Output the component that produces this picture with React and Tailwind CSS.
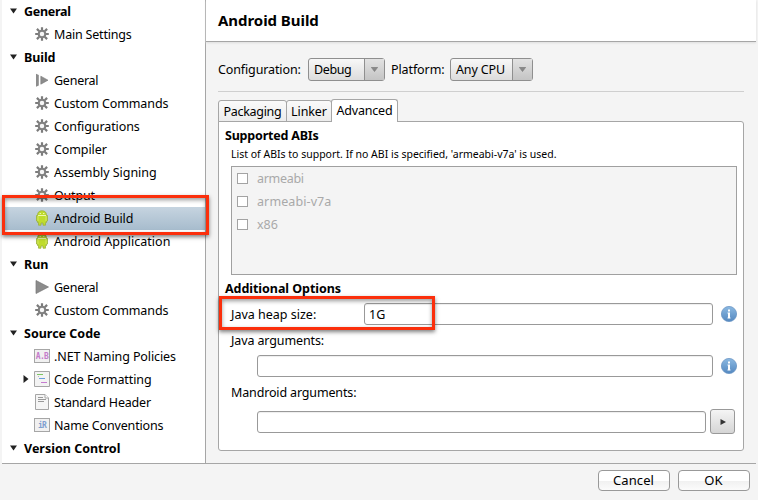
import React from "react";

function Gear() {
  return (
    <svg width="14" height="14" viewBox="0 0 14 14">
      <g stroke="#7c7c7c" strokeWidth="2.200">
        <path d="M7 .2v3.300M7 10.500v3.300M.2 7h3.300M10.500 7h3.300" />
        <path d="M1.900 1.900l2.400 2.400M9.700 9.700l2.400 2.400M12.100 1.900L9.700 4.300M4.300 9.700l-2.400 2.400" />
      </g>
      <circle cx="7" cy="7" r="3.300" fill="#f6f6f6" stroke="#808080" strokeWidth="2.100" />
    </svg>
  );
}

function Step() {
  return (
    <svg width="14" height="14" viewBox="0 0 14 14">
      <path d="M1 .8l2.800 1.200v10.500L1 13.700z" fill="#8c8c8c" />
      <path d="M5.800 3.200v8L13 7.200z" fill="#8c8c8c" stroke="#777" strokeWidth=".6" />
    </svg>
  );
}

function Play() {
  return (
    <svg width="14" height="14" viewBox="0 0 14 14">
      <path d="M1 .5v13L13.500 7z" fill="#8c8c8c" stroke="#777" strokeWidth=".7" />
    </svg>
  );
}

function Droid() {
  return (
    <svg width="14" height="16" viewBox="0 0 14 16">
      <path
        d="M2.500 5.500C2.500 2.300 4 .8 7 .8s4.500 1.500 4.500 4.700h1v5.500h-1v1.500h-1v2.700H8v-2.200H6v2.200H3.500v-2.700h-1V11h-1V5.500z"
        fill="#bfdc2c"
        stroke="#9bb13c"
        strokeWidth=".8"
      />
      <path d="M3 5.500h8" stroke="#edf7ae" />
      <path d="M3 6v5M11 6v5" stroke="#dcec7c" strokeWidth=".7" />
      <circle cx="5.200" cy="3.500" r=".6" fill="#fff" />
      <circle cx="8.800" cy="3.500" r=".6" fill="#fff" />
    </svg>
  );
}

function Badge({ children, color }) {
  return (
    <span className={"flex h-[14px] w-4 items-center justify-center border border-[#a6a6a6] bg-[#f1f1f1] pt-0.5 font-['DejaVu_Sans_Mono',monospace] text-[8px] font-bold tracking-[-0.7px] leading-none " + color}>
      {children}
    </span>
  );
}

function Format() {
  return (
    <svg width="16" height="16" viewBox="0 0 16 16">
      <path d="M.5.500h15v15H.5z" fill="#f3f3f3" stroke="#a6a6a6" />
      <path d="M3 3.500h6" stroke="#7cc562" />
      <path d="M4 5.500h1" stroke="#bbb" />
      <path d="M5 7.500h6" stroke="#6a9fdc" />
      <path d="M7 11.500h6" stroke="#c57bd0" />
    </svg>
  );
}

function Page() {
  return (
    <svg width="14" height="16" viewBox="0 0 14 16">
      <path d="M.5.500h9.500l3.500 3.500v11.500H.5z" fill="#f5f5f5" stroke="#a6a6a6" />
      <path d="M10 .5V4h3.500" fill="#fff" stroke="#a6a6a6" />
      <path d="M3 3.500h5M3 5.500h8M3 7.500h6" stroke="#999" />
    </svg>
  );
}

function Section({ children, track }) {
  return (
    <div className="flex h-[23px] items-center pb-px pl-2">
      <svg width="7" height="6" viewBox="0 0 7 6">
        <path d="M0 .5h7L3.500 5.500z" fill="#222" />
      </svg>
      <span className={"mt-0.5 ml-[7px] font-bold " + track}>{children}</span>
    </div>
  );
}

function Item({ icon, children, track, selected, expandable }) {
  return (
    <div className={"flex h-[23px] items-center pb-px " + (selected ? "bg-linear-to-b from-[#c6d4e0] to-[#a7bccd]" : "")}>
      <span className="flex w-8 justify-end pr-1">
        {expandable && (
          <svg width="6" height="8" viewBox="0 0 6 8" className="mr-px">
            <path d="M.5 0v8L5.500 4z" fill="#222" />
          </svg>
        )}
      </span>
      <span className="flex w-4 justify-center">{icon}</span>
      <span className={"mt-0.5 ml-1 " + track}>{children}</span>
    </div>
  );
}

function Combo({ children, width, track }) {
  return (
    <div className={"flex h-[23px] rounded-[3px] border border-[#8f8f8f] bg-linear-to-b from-[#f8f8f8] to-[#dcdcdc] " + width}>
      <span className={"flex flex-1 items-center pt-px pl-[5px] " + track}>{children}</span>
      <span className="flex w-5 items-center justify-center border-l border-[#8f8f8f] bg-linear-to-b from-[#e2e2e2] to-[#c4c4c4]">
        <svg width="7" height="5" viewBox="0 0 7 5">
          <path d="M.3.300h6.400L3.500 4.600z" fill="#888" stroke="#777" strokeWidth=".6" />
        </svg>
      </span>
    </div>
  );
}

function Abi({ children, track }) {
  return (
    <div className="flex h-[23px] items-center">
      <span className="size-[11px] border border-[#a3a3a3] bg-white" />
      <span className={"mt-px ml-[9px] " + track}>{children}</span>
    </div>
  );
}

function Info() {
  return (
    <svg width="16" height="16" viewBox="0 0 16 16">
      <defs>
        <linearGradient id="info" x1="0" y1="0" x2="0" y2="1">
          <stop offset="0" stopColor="#8bb9e2" />
          <stop offset="1" stopColor="#5488c0" />
        </linearGradient>
      </defs>
      <circle cx="8" cy="8" r="7.600" fill="url(#info)" stroke="#6b96c4" strokeWidth=".8" />
      <path d="M7 3.500h2v2H7zM6.500 6.500H9v5h.5v1h-3v-1H7v-4h-.5z" fill="#fff" />
    </svg>
  );
}

function Field({ width, children }) {
  return <div className={"flex h-[22px] items-center rounded-[3px] border border-[#999] bg-white pt-0.5 pl-1 shadow-[inset_0_1px_1px_#eee] " + width}>{children}</div>;
}

function Button({ children }) {
  return (
    <div className="flex h-[21px] w-[72px] items-center justify-center rounded-[4px] border border-[#999] bg-linear-to-b from-white from-50% via-[#f0f0f0] via-50% to-[#fbfbfb] pr-px pb-0.5 text-[13px] tracking-[0.1px]">
      {children}
    </div>
  );
}

export default function App() {
  return (
    <div className="relative flex h-[500px] w-[758px] flex-col overflow-hidden bg-[#f4f4f4] font-['Noto_Sans','Open_Sans',sans-serif] text-[12.5px] leading-4 whitespace-nowrap text-black">
      <div className="mx-[2px] flex h-[464px] border-b border-[#a6a6a6]">
        <nav className="w-[204px] shrink-0 overflow-hidden border-r border-[#a6a6a6] bg-white">
          <Section track="tracking-[-0.3px]">General</Section>
          <Item icon={<Gear />} track="tracking-[-0.2px]">Main Settings</Item>
          <Section track="tracking-[-0.1px]">Build</Section>
          <Item icon={<Step />} track="tracking-[-0.25px]">General</Item>
          <Item icon={<Gear />} track="tracking-[-0.1px]">Custom Commands</Item>
          <Item icon={<Gear />} track="tracking-[-0.1px]">Configurations</Item>
          <Item icon={<Gear />} track="tracking-[-0.1px]">Compiler</Item>
          <Item icon={<Gear />} track="tracking-[-0.05px]">Assembly Signing</Item>
          <Item icon={<Gear />} track="tracking-[-0.2px]">Output</Item>
          <Item icon={<Droid />} track="tracking-[-0.05px]" selected>Android Build</Item>
          <Item icon={<Droid />} track="tracking-[0.03px]">Android Application</Item>
          <Section track="">Run</Section>
          <Item icon={<Play />} track="tracking-[-0.25px]">General</Item>
          <Item icon={<Gear />} track="tracking-[-0.1px]">Custom Commands</Item>
          <Section track="">Source Code</Section>
          <Item icon={<Badge color="text-[#c47ccb]">A.B</Badge>} track="tracking-[-0.1px]">.NET Naming Policies</Item>
          <Item icon={<Format />} track="tracking-[-0.1px]" expandable>Code Formatting</Item>
          <Item icon={<Page />} track="tracking-[-0.2px]">Standard Header</Item>
          <Item icon={<Badge color="text-[#7f9fd0]">iR</Badge>} track="tracking-[-0.15px]">Name Conventions</Item>
          <Section track="">Version Control</Section>
        </nav>
        <main className="flex min-w-0 flex-1 flex-col">
          <h1 className="flex h-[42px] shrink-0 items-center border-b border-[#a6a6a6] bg-white pb-px pl-3 text-[15px] font-bold tracking-[-0.05px] shadow-[0_1px_2px_#ddd]">Android Build</h1>
          <div className="mt-4 ml-3 flex h-[23px] w-[526px] items-center">
            <span className="mt-px w-[90px] tracking-[-0.12px]">Configuration:</span>
            <Combo width="w-[77px]" track="tracking-[-0.4px]">Debug</Combo>
            <span className="mt-px ml-[6px] w-[59px] tracking-[-0.1px]">Platform:</span>
            <Combo width="w-[83px]" track="tracking-[-0.15px]">Any CPU</Combo>
          </div>
          <div className="mt-[10px] ml-3 h-px w-[526px] shrink-0 bg-[#cfcfcf]" />
          <div className="z-10 mt-[7px] ml-3 -mb-px flex h-[23px] items-end">
            <span className="flex h-[22px] w-[69px] items-center justify-center rounded-t-[3px] border border-[#a6a6a6] bg-linear-to-b from-[#fafafa] to-[#ececec] pt-px tracking-[-0.3px]">Packaging</span>
            <span className="-ml-px flex h-[22px] w-[46px] items-center justify-center rounded-t-[3px] border border-[#a6a6a6] bg-linear-to-b from-[#fafafa] to-[#ececec] pt-px tracking-[-0.1px]">Linker</span>
            <span className="-ml-px flex h-[23px] w-[67px] items-center justify-center rounded-t-[3px] border border-b-0 border-[#a6a6a6] bg-white pb-px tracking-[-0.2px]">Advanced</span>
          </div>
          <section className="ml-3 flex h-[330px] w-[526px] shrink-0 flex-col rounded-[3px] rounded-tl-none border border-[#a6a6a6] bg-white pl-[6px]">
            <h2 className="mt-[6px] h-4 font-bold tracking-[-0.2px]">Supported ABIs</h2>
            <p className="mt-0.5 ml-[6px] h-4 text-[10.5px]">List of ABIs to support. If no ABI is specified, &#39;armeabi-v7a&#39; is used.</p>
            <div className="mt-1 ml-[6px] h-[109px] w-[506px] shrink-0 border border-[#a0a0a0] bg-[#f4f4f4] pl-[5px] text-[#a9a9a9]">
              <Abi track="tracking-[-0.3px]">armeabi</Abi>
              <Abi track="tracking-[0.1px]">armeabi-v7a</Abi>
              <Abi track="">x86</Abi>
            </div>
            <h2 className="mt-[6px] h-4 font-bold tracking-[-0.05px]">Additional Options</h2>
            <div className="mt-[6px] ml-[6px] flex h-[22px] items-center">
              <span className="mt-0.5 w-[133px]">Java heap size:</span>
              <Field width="w-[349px]">1G</Field>
              <span className="ml-2"><Info /></span>
            </div>
            <div className="mt-2 ml-[6px] h-4 tracking-[-0.12px]">Java arguments:</div>
            <div className="mt-[6px] ml-8 flex h-[22px] items-center">
              <Field width="w-[456px]" />
              <span className="ml-2"><Info /></span>
            </div>
            <div className="mt-2 ml-[6px] h-4 tracking-[-0.15px]">Mandroid arguments:</div>
            <div className="mt-2 ml-8 flex h-[25px] items-center">
              <Field width="w-[449px]" />
              <span className="ml-1 flex h-[25px] w-[25px] items-center justify-center rounded-[3px] border border-[#999] bg-linear-to-b from-[#f5f5f5] to-[#d5d5d5]">
                <svg width="6" height="6" viewBox="0 0 6 6"><path d="M.5 0v6L6 3z" fill="#333" /></svg>
              </span>
            </div>
          </section>
        </main>
      </div>
      <footer className="mt-[6px] mr-2 flex justify-end gap-2">
        <Button>Cancel</Button>
        <Button>OK</Button>
      </footer>
      <div className="absolute top-[195px] left-[2px] h-[40px] w-[207px] border-3 border-[#fb2f0c] shadow-[0_2px_4px_rgba(0,0,0,.5),inset_0_2px_4px_rgba(0,0,0,.4)]" />
      <div className="absolute top-[296px] left-[219px] h-[34px] w-[216px] border-3 border-[#fb2f0c] shadow-[0_2px_4px_rgba(0,0,0,.5),inset_0_2px_4px_rgba(0,0,0,.4)]" />
    </div>
  );
}
